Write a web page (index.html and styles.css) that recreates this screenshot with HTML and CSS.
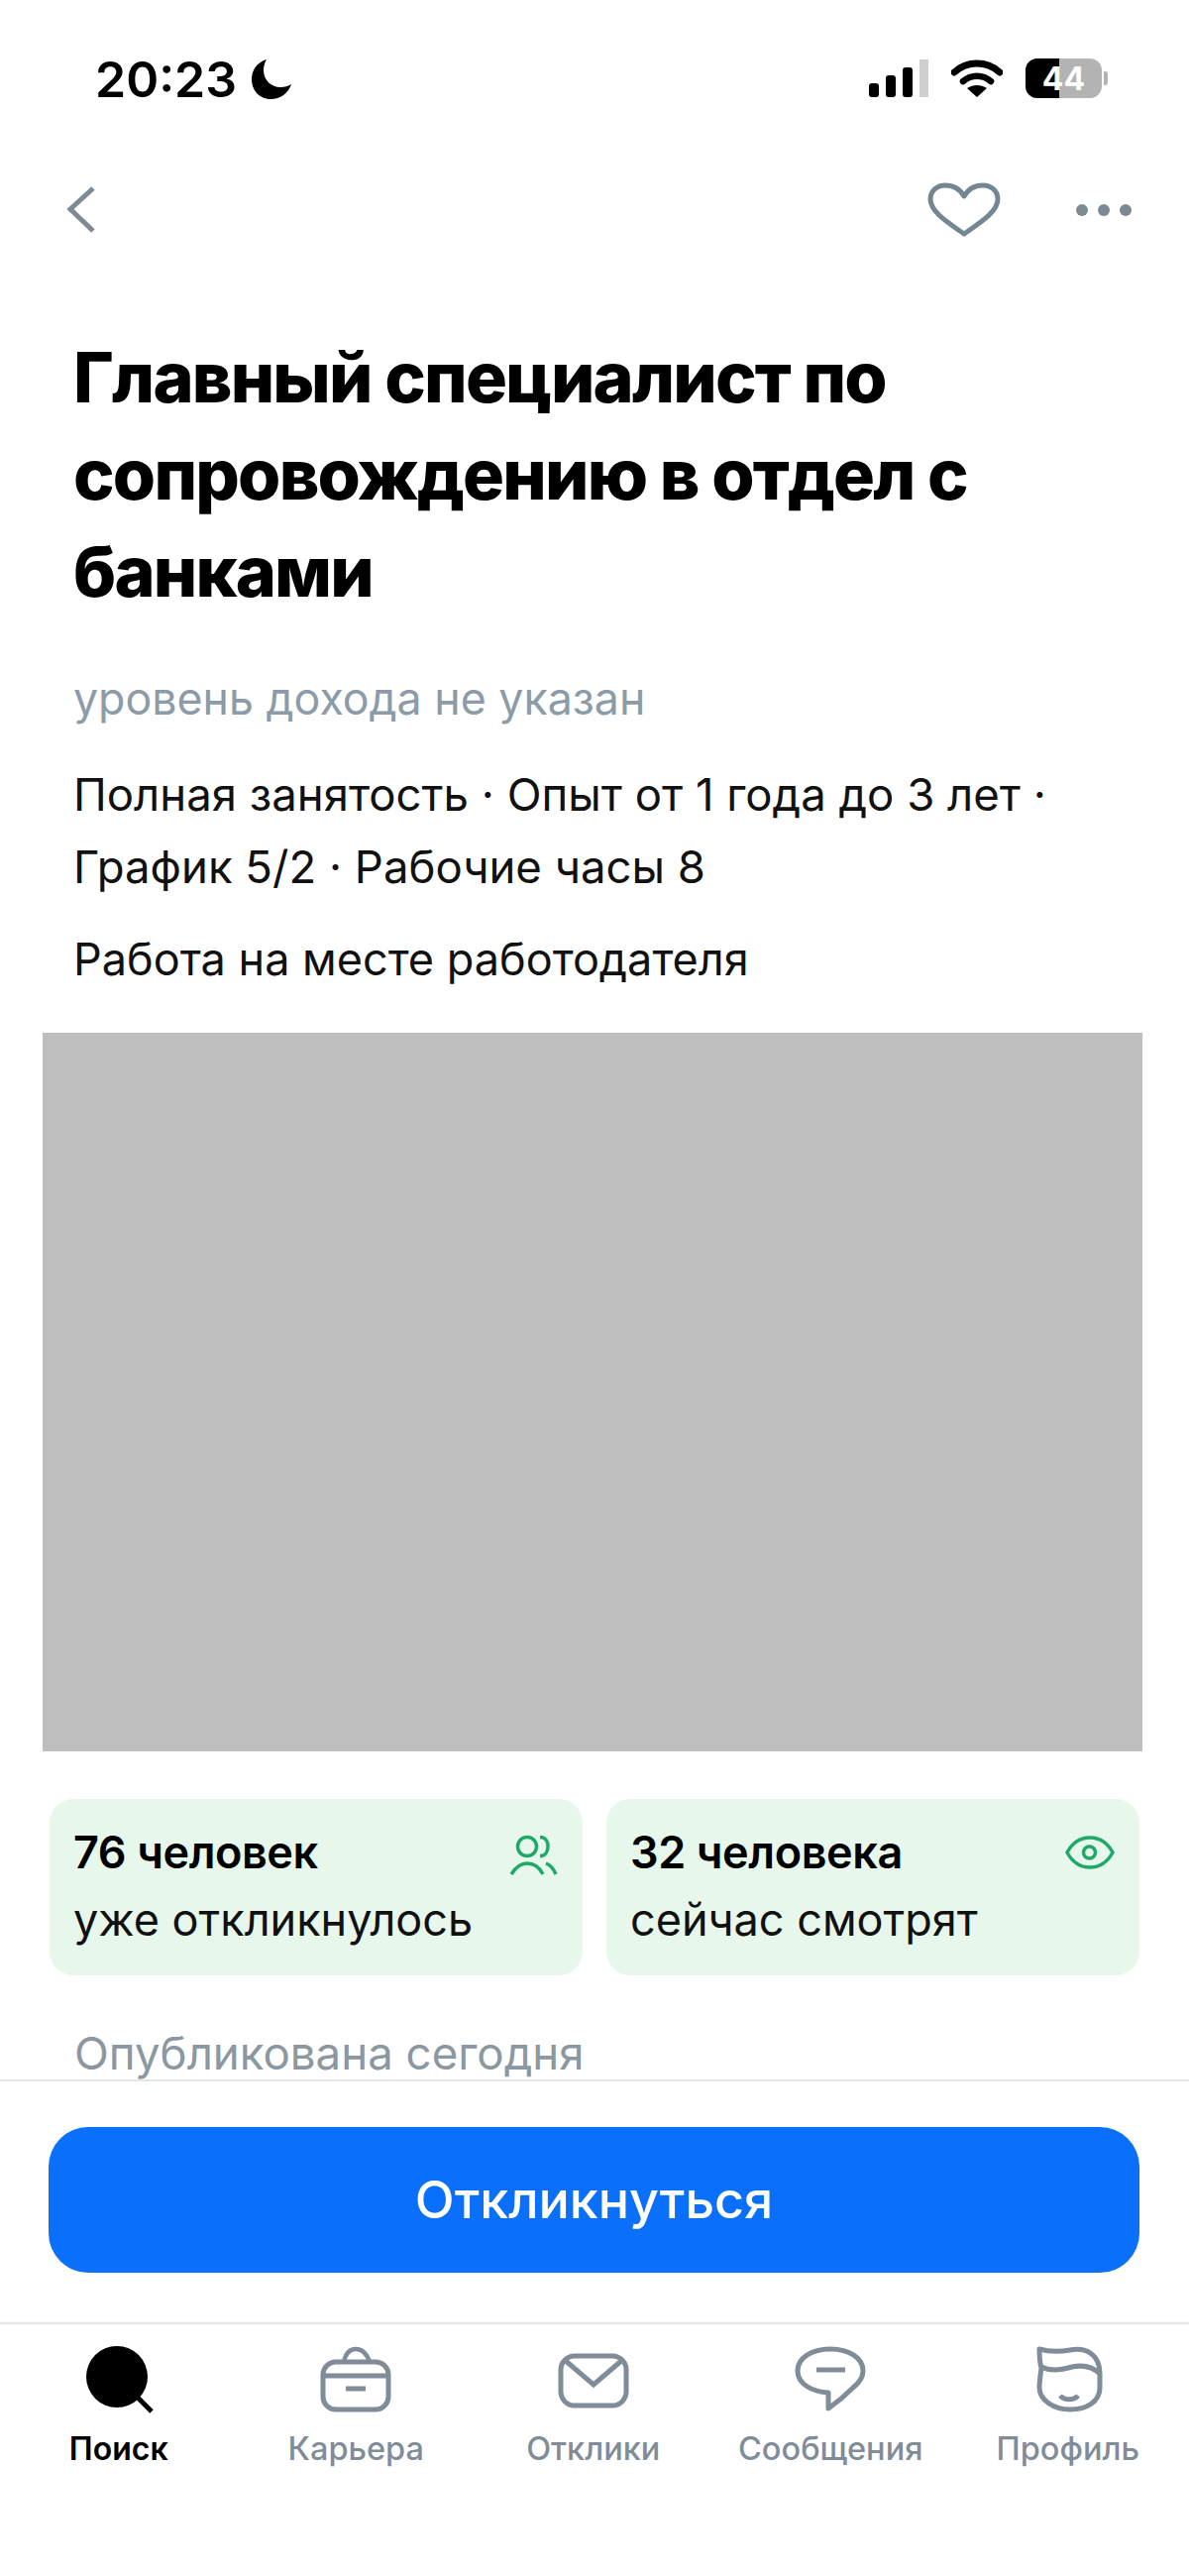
FILE: index.html
```html
<!DOCTYPE html>
<html lang="ru">

<head>
    <meta charset="UTF-8">
    <title>Вакансия</title>
    <link rel="stylesheet" href="styles.css">
</head>

<body>
    <!-- Status bar -->
    <div class="status-bar">
        <div class="status-left">
            <span class="clock">20:23</span>
            <svg class="moon" width="42" height="42" viewBox="0 0 42 42">
                <path d="M16 1C6 4 1 12 1 21c0 11 8 20 19 20 10 0 18-6 21-15-3 2-7 3-11 3C20 29 13 21 13 12c0-4 1-8 3-11z" fill="#000"/>
            </svg>
        </div>
        <div class="status-right">
            <svg width="60" height="38" viewBox="0 0 60 38">
                <rect x="0" y="24" width="10" height="14" rx="3" fill="#000"/>
                <rect x="17" y="16" width="10" height="22" rx="3" fill="#000"/>
                <rect x="34" y="8" width="10" height="30" rx="3" fill="#000"/>
                <rect x="51" y="0" width="9" height="38" fill="#cfcfcf"/>
            </svg>
            <svg width="52" height="38" viewBox="0 0 52 38">
                <path d="M3 13C16 1 36 1 49 13" fill="none" stroke="#000" stroke-width="7" stroke-linecap="round"/>
                <path d="M12 22c8-7 20-7 28 0" fill="none" stroke="#000" stroke-width="6.5" stroke-linecap="round"/>
                <path d="M26 38L16 29c6-4 14-4 20 0z" fill="#000"/>
            </svg>
            <div class="battery">
                <div class="battery-body">
                    <div class="battery-fill"></div>
                    <span class="battery-num">44</span>
                </div>
                <div class="battery-nub"></div>
            </div>
        </div>
    </div>

    <!-- Top nav -->
    <div class="top-nav">
        <svg width="30" height="50" viewBox="0 0 30 50">
            <path d="M27 3L4 24l23 22" fill="none" stroke="#7e8b95" stroke-width="5"/>
        </svg>
        <div class="top-actions">
            <svg width="74" height="56" viewBox="0 0 74 56">
                <path d="M37 52C25 43 3 31 3 17 3 8 10 3 18 3c8 0 15 4 19 11C41 7 48 3 56 3c8 0 15 5 15 14 0 14-22 26-34 35z" fill="none" stroke="#748692" stroke-width="5" stroke-linejoin="round"/>
            </svg>
            <div class="dots">
                <span class="dot"></span>
                <span class="dot"></span>
                <span class="dot"></span>
            </div>
        </div>
    </div>

    <!-- Vacancy content -->
    <main class="content">
        <h1 class="title">Главный специалист по сопровождению в отдел с банками</h1>
        <p class="salary">уровень дохода не указан</p>
        <p class="meta">Полная занятость · Опыт от 1 года до 3 лет · График 5/2 · Рабочие часы 8</p>
        <p class="place">Работа на месте работодателя</p>

        <div class="hidden-block"></div>

        <div class="cards">
            <div class="card">
                <div class="card-text">
                    <strong>76 человек</strong>
                    <span>уже откликнулось</span>
                </div>
                <svg class="card-icon" width="50" height="40" viewBox="0 0 50 40">
                    <circle cx="19" cy="11" r="9.5" fill="none" stroke="#1fa968" stroke-width="3.5"/>
                    <path d="M3 39C8 31 13 28 19 28s12 3 16 11" fill="none" stroke="#1fa968" stroke-width="3.5"/>
                    <path d="M32 1.5c5 0 8 4 8 9.5s-3 9.5-8 9.5M38 28c5 2 8 6 10 11" fill="none" stroke="#1fa968" stroke-width="3.5"/>
                </svg>
            </div>
            <div class="card">
                <div class="card-text">
                    <strong>32 человека</strong>
                    <span>сейчас смотрят</span>
                </div>
                <svg class="card-icon" width="50" height="34" viewBox="0 0 50 34">
                    <path d="M2 17C8 6 16 2 25 2s17 4 23 15c-6 11-14 15-23 15S8 28 2 17z" fill="none" stroke="#1fa968" stroke-width="3.5"/>
                    <circle cx="24.500" cy="17" r="6" fill="none" stroke="#1fa968" stroke-width="3.5"/>
                </svg>
            </div>
        </div>

        <p class="published">Опубликована сегодня</p>
    </main>

    <!-- Respond button -->
    <div class="action-bar">
        <button class="respond-btn">Откликнуться</button>
    </div>

    <!-- Tab bar -->
    <nav class="tab-bar">
        <div class="tab tab-active">
            <svg width="72" height="70" viewBox="0 0 72 70">
                <circle cx="34" cy="31" r="31" fill="#000"/>
                <path d="M55 52l14 14" stroke="#000" stroke-width="5"/>
            </svg>
            <span>Поиск</span>
        </div>
        <div class="tab">
            <svg width="72" height="70" viewBox="0 0 72 70">
                <path d="M24 16c2-9 6-13 12-13s11 4 14 13" fill="none" stroke="#808c98" stroke-width="4.500"/>
                <rect x="3" y="16" width="66" height="48" rx="13" fill="none" stroke="#808c98" stroke-width="5"/>
                <path d="M3 30h66M26 43h20" fill="none" stroke="#808c98" stroke-width="5"/>
            </svg>
            <span>Карьера</span>
        </div>
        <div class="tab">
            <svg width="72" height="70" viewBox="0 0 72 70">
                <rect x="3" y="10" width="66" height="50" rx="14" fill="none" stroke="#808c98" stroke-width="5"/>
                <path d="M8 15l28 24 28-24" fill="none" stroke="#808c98" stroke-width="5"/>
            </svg>
            <span>Отклики</span>
        </div>
        <div class="tab">
            <svg width="72" height="70" viewBox="0 0 72 70">
                <path d="M36 3C17 3 3 12 3 25c0 13 14 21 31 22v16c10-7 19-15 26-22 6-5 9-10 9-16C69 12 55 3 36 3z" fill="none" stroke="#808c98" stroke-width="5" stroke-linejoin="round"/>
                <path d="M22 24h29" fill="none" stroke="#808c98" stroke-width="5"/>
            </svg>
            <span>Сообщения</span>
        </div>
        <div class="tab">
            <svg width="72" height="70" viewBox="0 0 72 70">
                <path d="M7 3c10 3 20 3 31 1 17-3 30 5 30 24v14c0 14-13 22-30 22S7 54 7 42c0-6 1-12 2-20-2-6-2-12-2-19z" fill="none" stroke="#808c98" stroke-width="5" stroke-linejoin="round"/>
                <path d="M9 21c10 5 21 3 31 0 10-2 20-1 28 7M28 50c4 5 14 5 18 0" fill="none" stroke="#808c98" stroke-width="5"/>
            </svg>
            <span>Профиль</span>
        </div>
    </nav>
</body>

</html>
```

FILE: styles.css
```css
/* Basic reset */
* {
    margin: 0;
    padding: 0;
    box-sizing: border-box;
}

body {
    width: 1200px;
    height: 2599px;
    overflow: hidden;
    display: flex;
    flex-direction: column;
    font-family: 'Inter', 'Noto Sans', sans-serif;
    background-color: #fff;
    color: #111;
}

/* Status bar */
.status-bar {
    height: 100px;
    padding: 59px 82px 0 96px;
    display: flex;
    justify-content: space-between;
    align-items: flex-start;
    flex-shrink: 0;
}

.status-left {
    display: flex;
    align-items: center;
    gap: 14px;
}

.clock {
    font-size: 50px;
    line-height: 42px;
    font-weight: 600;
    color: #000;
}

.status-right {
    display: flex;
    align-items: center;
    gap: 23px;
}

.battery {
    display: flex;
    align-items: center;
    gap: 2px;
}

.battery-body {
    position: relative;
    width: 77px;
    height: 40px;
    border-radius: 12px;
    background-color: #b3b3b3;
    overflow: hidden;
    display: flex;
    align-items: center;
    justify-content: center;
}

.battery-fill {
    position: absolute;
    left: 0;
    top: 0;
    bottom: 0;
    width: 44%;
    background-color: #000;
}

.battery-num {
    position: relative;
    font-size: 32px;
    font-weight: 700;
    color: #fff;
}

.battery-nub {
    width: 4px;
    height: 14px;
    border-radius: 0 3px 3px 0;
    background-color: #b3b3b3;
}

/* Top nav */
.top-nav {
    height: 232px;
    padding: 0 58px 8px 67px;
    display: flex;
    justify-content: space-between;
    align-items: center;
    flex-shrink: 0;
}

.top-actions {
    display: flex;
    align-items: center;
    gap: 76px;
}

.dots {
    display: flex;
    gap: 10px;
}

.dot {
    width: 12px;
    height: 12px;
    border-radius: 50%;
    background-color: #7c8a94;
}

/* Content */
.content {
    flex: 1;
    min-height: 0;
    overflow: hidden;
    padding: 0 47px 0 43px;
}

.title {
    padding: 0 31px;
    font-size: 70px;
    line-height: 98px;
    font-weight: 800;
    letter-spacing: -1.8px;
    color: #000;
}

.salary {
    margin-top: 49px;
    padding-left: 31px;
    font-size: 44.7px;
    line-height: 60px;
    color: #8b9ba7;
}

.meta {
    margin-top: 30px;
    padding: 0 31px;
    font-size: 45.5px;
    line-height: 73px;
}

.place {
    margin-top: 20px;
    padding-left: 31px;
    font-size: 45px;
    line-height: 73px;
}

.hidden-block {
    margin-top: 38px;
    width: 1110px;
    height: 725px;
    background-color: #bebebe;
}

/* Stat cards */
.cards {
    margin-top: 48px;
    padding-left: 7px;
    display: flex;
    gap: 24px;
}

.card {
    width: 538px;
    height: 178px;
    padding: 20px 25px 0 24px;
    border-radius: 24px;
    background-color: #e8f7ec;
    display: flex;
    justify-content: space-between;
    align-items: flex-start;
}

.card-text {
    display: flex;
    flex-direction: column;
    font-size: 45px;
    line-height: 68px;
}

.card-text strong {
    font-weight: 600;
    letter-spacing: -0.4px;
    color: #000;
}

.card-icon {
    margin-top: 17px;
}

.published {
    margin-top: 53px;
    padding-left: 32px;
    font-size: 45.6px;
    line-height: 52px;
    color: #8b97a1;
}

/* Respond button */
.action-bar {
    height: 247px;
    padding: 46px 50px 0 49px;
    border-top: 2px solid #e4e6e8;
    border-bottom: 2px solid #e4e6e8;
    flex-shrink: 0;
    background-color: #fff;
}

.respond-btn {
    width: 100%;
    height: 147px;
    border: none;
    border-radius: 40px;
    background-color: #0a6ffb;
    color: #fff;
    font-family: inherit;
    font-size: 52px;
    font-weight: 500;
}

/* Tab bar */
.tab-bar {
    height: 254px;
    padding-top: 22px;
    display: flex;
    flex-shrink: 0;
}

.tab {
    width: 239.5px;
    display: flex;
    flex-direction: column;
    align-items: center;
    gap: 12px;
    font-size: 32.5px;
    line-height: 44px;
    font-weight: 500;
    color: #808c98;
}

.tab-active {
    font-size: 32px;
    font-weight: 600;
    color: #000;
}
```
